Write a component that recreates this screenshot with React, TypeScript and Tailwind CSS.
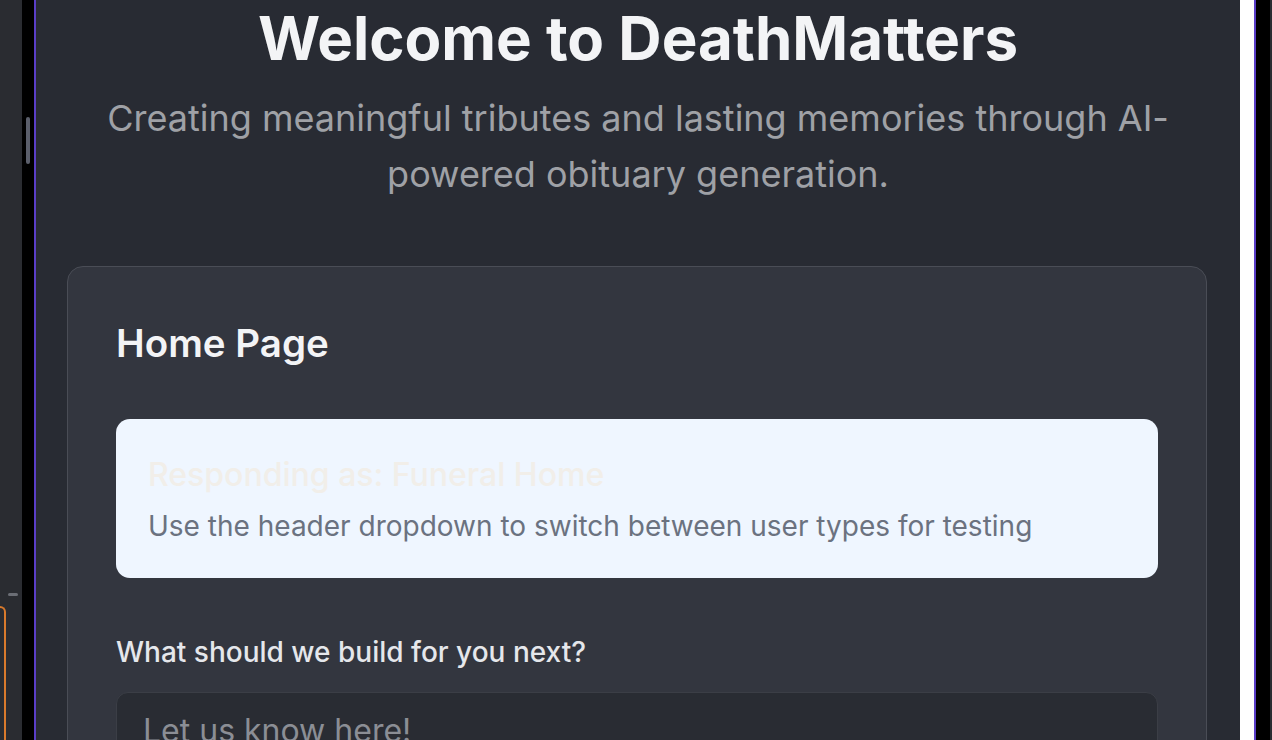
export default function App() {
  return (
    <div className="flex h-[740px] w-[1272px] overflow-hidden font-['Inter','Noto_Sans',sans-serif] bg-black">
      {/* left editor gutter */}
      <div className="flex w-[22px] shrink-0 flex-col bg-[#2a2c31] pt-[593px]">
        <div className="ml-[8px] h-[4px] w-[10px] rounded-full bg-[#6b6e75]" />
        <div className="-ml-[10px] mt-[10px] h-[200px] w-[16px] rounded-tr-[6px] border-t-2 border-r-2 border-[#d97a2c]" />
      </div>
      <div className="flex w-[12px] shrink-0 flex-col bg-black pt-[117px]">
        <div className="ml-[4px] h-[47px] w-[4px] rounded-full bg-[#5b5f6b]" />
      </div>
      <div className="w-[2px] shrink-0 bg-[#5a3ec8]" />

      <main className="flex w-[1204px] shrink-0 flex-col items-center overflow-hidden bg-[#282b33]">
        <h1 className="mt-[8px] text-center text-[60px] font-bold leading-[60px] text-[#f3f4f6]">
          Welcome to DeathMatters
        </h1>
        <p className="mt-[22px] px-[64px] text-center text-[36px] leading-[56px] text-[#9fa1a6]">
          Creating meaningful tributes and lasting memories through AI-powered obituary generation.
        </p>

        <section className="ml-[31px] mt-[64px] w-[1140px] shrink-0 self-start rounded-[16px] border border-[#4a4d56] bg-[#33363f] px-12 pt-12 pb-12">
          <h2 className="text-[38.5px] font-semibold leading-[56px] text-[#f3f4f6]">Home Page</h2>

          <div className="mt-12 rounded-[14px] bg-[#eff6ff] p-8">
            <h3 className="text-[32px] font-medium leading-[48px] text-[#f1eee9]">
              Responding as: Funeral Home
            </h3>
            <p className="mt-[7px] text-[28px] leading-[40px] text-[#6b7280]">
              Use the header dropdown to switch between user types for testing
            </p>
          </div>

          <label className="mt-[54px] block text-[28px] font-medium leading-[40px] text-[#e5e7eb]">
            What should we build for you next?
          </label>
          <textarea
            placeholder="Let us know here!"
            className="mt-[20px] block h-[200px] w-full resize-none rounded-[12px] border border-[#3b3e46] bg-[#292c33] px-[26px] pt-[18px] text-[32px] leading-[40px] text-[#e5e7eb] outline-none placeholder:text-[#8b8e95]"
          />
        </section>
      </main>

      <div className="w-[14px] shrink-0 bg-white" />
      <div className="w-[2px] shrink-0 bg-[#5a3ec8]" />
      <div className="w-[14px] shrink-0 bg-black" />
      <div className="w-[2px] shrink-0 bg-[#2a2c31]" />
    </div>
  );
}
